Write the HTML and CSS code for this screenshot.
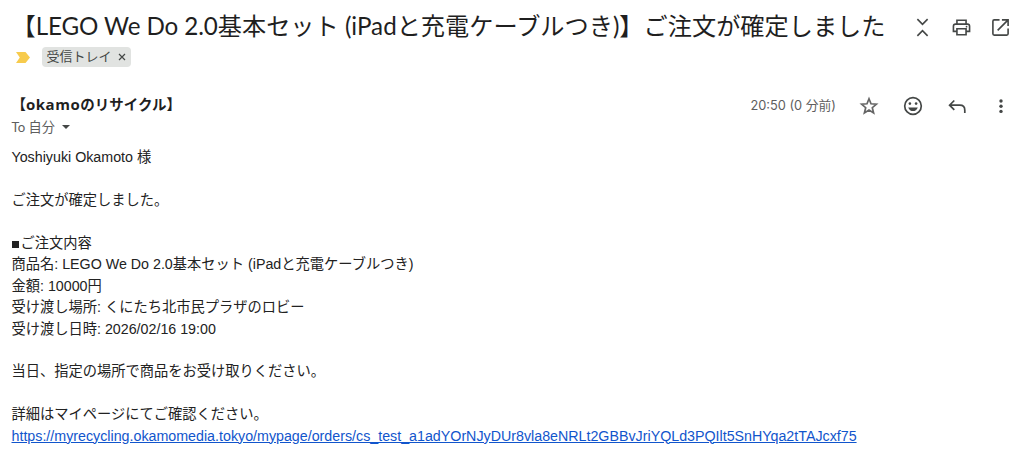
FILE: index.html
```html
<!DOCTYPE html>
<html lang="ja">
<head>
  <meta charset="UTF-8">
  <meta name="viewport" content="width=device-width, initial-scale=1.0">
  <title>ご注文が確定しました</title>
  <link rel="stylesheet" href="styles.css">
</head>
<body>

  <div class="subject-row">
    <h1 class="subject">【<span class="latin">LEGO We Do 2.0</span>基本セット (iPadと充電ケーブルつき)】ご注文が確定しました</h1>
    <div class="subject-actions">
      <svg class="icon" viewBox="0 0 20 20"><path d="M4.6 1.2 10 6.7l5.4-5.5M4.6 18.8 10 13.3l5.4 5.5" /></svg>
      <svg class="icon" viewBox="0 0 20 20"><path d="M5.2 6V2.4h9.6V6M5.2 14.1H1.5V8.6q0-2.2 2.2-2.2h12.6q2.2 0 2.2 2.2v5.5h-3.7M5.2 11.3h9.6v6.3H5.2z" /><circle class="dot" cx="15.3" cy="9.1" r="0.9" /></svg>
      <svg class="icon" viewBox="0 0 20 20"><path d="M9 2H3.4Q2 2 2 3.4v13.2Q2 18 3.4 18h13.2q1.4 0 1.4-1.4V11M11.5 2H18v6.5M18 2 7 13" /></svg>
    </div>
  </div>

  <div class="label-row">
    <svg class="importance" viewBox="0 0 14 11"><path d="M0 0h9.5L14 5.5 9.5 11H0l3.8-5.5z" /></svg>
    <div class="label">
      <span>受信トレイ</span>
      <svg class="label-close" viewBox="0 0 8 8"><path d="M1 1l6 6M7 1 1 7" /></svg>
    </div>
  </div>

  <div class="sender-row">
    <div class="sender">【<span class="sender-latin">okamo</span>のリサイクル】</div>
    <div class="date">20:50 (0 分前)</div>
    <div class="sender-actions">
      <svg class="icon star" viewBox="0 0 20 20"><path d="M10 2.8l2 5 5.4.4-4.1 3.5 1.3 5.3-4.6-2.9L5.4 17l1.3-5.3-4.1-3.5L8 7.8z" /></svg>
      <svg class="icon" viewBox="0 0 20 20"><circle cx="10" cy="10" r="8.3" /><circle class="dot" cx="6.9" cy="7.6" r="1.3" /><circle class="dot" cx="13.1" cy="7.6" r="1.3" /><path class="dot" d="M5.2 11.4h9.6Q13.4 15 10 15t-4.8-3.6z" /></svg>
      <svg class="icon" viewBox="0 0 20 20"><path d="M7.3 4.5 2.6 9.2l4.7 4.7M2.6 9.2h10.2q5 0 5 5v2.9" /></svg>
      <svg class="icon" viewBox="0 0 20 20"><circle class="dot" cx="10" cy="5" r="1.7" /><circle class="dot" cx="10" cy="10.2" r="1.7" /><circle class="dot" cx="10" cy="15.4" r="1.7" /></svg>
    </div>
  </div>

  <div class="recipient">
    <span>To 自分</span>
    <span class="caret"></span>
  </div>

  <div class="mail-body">
    <p>Yoshiyuki Okamoto 様</p>
    <p>ご注文が確定しました。</p>
    <p>
      <span class="square"></span>ご注文内容<br>
      商品名: LEGO We Do 2.0基本セット (iPadと充電ケーブルつき)<br>
      金額: 10000円<br>
      受け渡し場所: くにたち北市民プラザのロビー<br>
      受け渡し日時: 2026/02/16 19:00
    </p>
    <p>当日、指定の場所で商品をお受け取りください。</p>
    <p>
      詳細はマイページにてご確認ください。<br>
      <a href="#">https://myrecycling.okamomedia.tokyo/mypage/orders/cs_test_a1adYOrNJyDUr8vla8eNRLt2GBBvJriYQLd3PQIlt5SnHYqa2tTAJcxf75</a>
    </p>
  </div>

</body>
</html>
```
FILE: styles.css
```css
body {
  margin: 0;
  padding: 7px 13px 0 11.5px;
  height: 457px;
  box-sizing: border-box;
  overflow: hidden;
  background-color: #fff;
  color: #1f1f1f;
  font-family: 'Liberation Sans', 'Noto Sans CJK JP', sans-serif;
}

.icon {
  width: 20px;
  height: 20px;
  fill: none;
  stroke: #444746;
  stroke-width: 1.7;
}

.icon .dot {
  fill: #444746;
  stroke: none;
}

/* 件名 */
.subject-row {
  display: flex;
  justify-content: space-between;
  align-items: center;
  height: 38px;
}

.subject {
  margin: 0;
  font-family: Lato, 'Noto Sans CJK JP', sans-serif;
  font-size: 24.2px;
  font-weight: 400;
  line-height: 38px;
  white-space: nowrap;
}

.latin {
  letter-spacing: -0.1px;
}

.subject-actions {
  display: flex;
  gap: 20px;
  padding: 3px 1px 0 0;
}

.subject-actions .icon {
  width: 19px;
  height: 19px;
}

/* ラベル */
.label-row {
  display: flex;
  align-items: center;
  height: 24px;
  padding-left: 4px;
}

.importance {
  width: 14px;
  height: 11px;
  fill: #f7cb4d;
}

.label {
  display: flex;
  align-items: center;
  gap: 6px;
  box-sizing: border-box;
  width: 89px;
  height: 20px;
  margin-left: 12px;
  padding-left: 5px;
  border-radius: 4px;
  background-color: #e1e3e1;
  color: #444746;
  font-size: 13px;
  line-height: 18px;
}

.label span {
  padding-bottom: 1px;
}

.label-close {
  width: 8px;
  height: 8px;
  stroke: #444746;
  stroke-width: 1.2;
}

/* 差出人 */
.sender-row {
  display: flex;
  align-items: center;
  height: 24px;
  margin-top: 23px;
}

.sender {
  flex: 1;
  margin-top: -1px;
  font-family: 'Open Sans', 'Noto Sans CJK JP', sans-serif;
  font-size: 14.5px;
  font-weight: 700;
}

.sender-latin {
  font-size: 15px;
  letter-spacing: 0.5px;
}

.date {
  margin-right: 23px;
  color: #5e5e5e;
  font-family: Inter, 'Noto Sans CJK JP', sans-serif;
  font-size: 12.8px;
}

.sender-actions {
  display: flex;
  gap: 24px;
  padding-top: 3px;
}

.star {
  stroke: #666;
}

.recipient {
  display: flex;
  align-items: center;
  gap: 7px;
  height: 20px;
  color: #5e5e5e;
  font-family: Lato, 'Noto Sans CJK JP', sans-serif;
  font-size: 13.2px;
}

.caret {
  margin-top: 1px;
  border: 4.5px solid transparent;
  border-top-color: #444746;
  border-bottom: 0;
}

/* 本文 */
.mail-body {
  margin-top: 11.4px;
  color: #222;
  font-size: 14.25px;
  line-height: 21.4px;
}

.mail-body p {
  margin: 0 0 21.4px;
  white-space: nowrap;
}

.mail-body a {
  color: #1155cc;
}

.square {
  display: inline-block;
  width: 7px;
  height: 7px;
  margin-right: 2px;
  background-color: #222;
}
```
